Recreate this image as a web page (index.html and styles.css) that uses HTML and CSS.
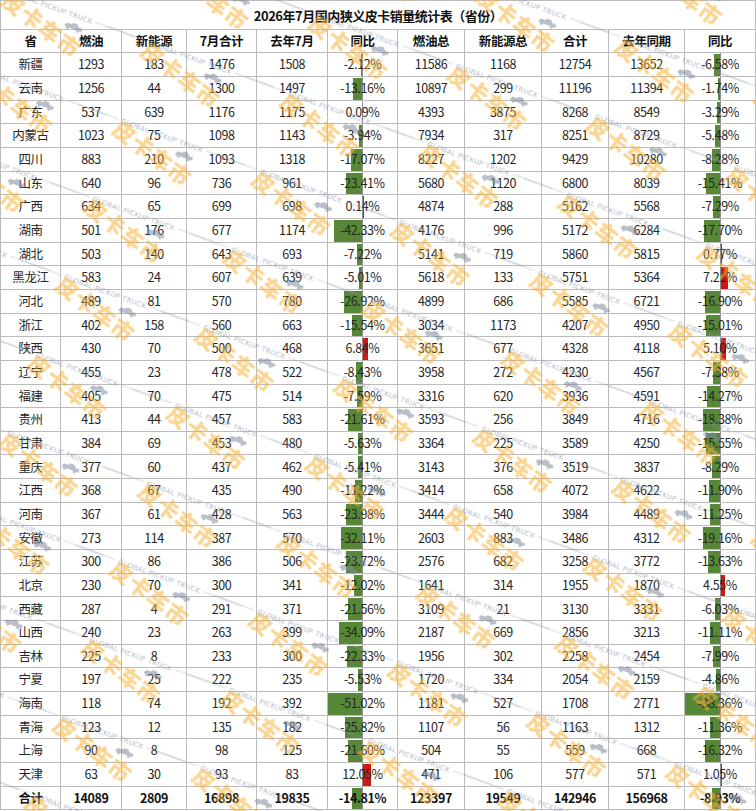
FILE: index.html
```html
<!DOCTYPE html>
<html lang="zh-CN">
<head>
<meta charset="utf-8">
<title>2026年7月国内狭义皮卡销量统计表（省份）</title>
<link rel="stylesheet" href="styles.css">
</head>
<body>
<div class="page">
  <div class="sheet">
    <div class="c title">2026年7月国内狭义皮卡销量统计表（省份）</div>

    <div class="c p h">省</div><div class="c h">燃油</div><div class="c h">新能源</div><div class="c h">7月合计</div><div class="c h">去年7月</div><div class="c h">同比</div><div class="c h">燃油总</div><div class="c h">新能源总</div><div class="c h">合计</div><div class="c h">去年同期</div><div class="c h">同比</div>

    <div class="c p">新疆</div><div class="c">1293</div><div class="c">183</div><div class="c">1476</div><div class="c">1508</div><div class="c y y1"><span class="n"><i style="width:1.41px"></i></span><span class="q"></span><em>-2.12%</em></div><div class="c">11586</div><div class="c">1168</div><div class="c">12754</div><div class="c">13652</div><div class="c y y2"><span class="n"><i style="width:6px"></i></span><span class="q"></span><em>-6.58%</em></div>

    <div class="c p">云南</div><div class="c">1256</div><div class="c">44</div><div class="c">1300</div><div class="c">1497</div><div class="c y y1"><span class="n"><i style="width:8.77px"></i></span><span class="q"></span><em>-13.16%</em></div><div class="c">10897</div><div class="c">299</div><div class="c">11196</div><div class="c">11394</div><div class="c y y2"><span class="n"><i style="width:1.59px"></i></span><span class="q"></span><em>-1.74%</em></div>

    <div class="c p">广东</div><div class="c">537</div><div class="c">639</div><div class="c">1176</div><div class="c">1175</div><div class="c y y1"><span class="n"></span><span class="q"><i style="width:0.06px"></i></span><em>0.09%</em></div><div class="c">4393</div><div class="c">3875</div><div class="c">8268</div><div class="c">8549</div><div class="c y y2"><span class="n"><i style="width:3px"></i></span><span class="q"></span><em>-3.29%</em></div>

    <div class="c p">内蒙古</div><div class="c">1023</div><div class="c">75</div><div class="c">1098</div><div class="c">1143</div><div class="c y y1"><span class="n"><i style="width:2.62px"></i></span><span class="q"></span><em>-3.94%</em></div><div class="c">7934</div><div class="c">317</div><div class="c">8251</div><div class="c">8729</div><div class="c y y2"><span class="n"><i style="width:5px"></i></span><span class="q"></span><em>-5.48%</em></div>

    <div class="c p">四川</div><div class="c">883</div><div class="c">210</div><div class="c">1093</div><div class="c">1318</div><div class="c y y1"><span class="n"><i style="width:11.37px"></i></span><span class="q"></span><em>-17.07%</em></div><div class="c">8227</div><div class="c">1202</div><div class="c">9429</div><div class="c">10280</div><div class="c y y2"><span class="n"><i style="width:7.55px"></i></span><span class="q"></span><em>-8.28%</em></div>

    <div class="c p">山东</div><div class="c">640</div><div class="c">96</div><div class="c">736</div><div class="c">961</div><div class="c y y1"><span class="n"><i style="width:15.59px"></i></span><span class="q"></span><em>-23.41%</em></div><div class="c">5680</div><div class="c">1120</div><div class="c">6800</div><div class="c">8039</div><div class="c y y2"><span class="n"><i style="width:14.05px"></i></span><span class="q"></span><em>-15.41%</em></div>

    <div class="c p">广西</div><div class="c">634</div><div class="c">65</div><div class="c">699</div><div class="c">698</div><div class="c y y1"><span class="n"></span><span class="q"><i style="width:0.09px"></i></span><em>0.14%</em></div><div class="c">4874</div><div class="c">288</div><div class="c">5162</div><div class="c">5568</div><div class="c y y2"><span class="n"><i style="width:6.65px"></i></span><span class="q"></span><em>-7.29%</em></div>

    <div class="c p">湖南</div><div class="c">501</div><div class="c">176</div><div class="c">677</div><div class="c">1174</div><div class="c y y1"><span class="n"><i style="width:28.19px"></i></span><span class="q"></span><em>-42.33%</em></div><div class="c">4176</div><div class="c">996</div><div class="c">5172</div><div class="c">6284</div><div class="c y y2"><span class="n"><i style="width:16.14px"></i></span><span class="q"></span><em>-17.70%</em></div>

    <div class="c p">湖北</div><div class="c">503</div><div class="c">140</div><div class="c">643</div><div class="c">693</div><div class="c y y1"><span class="n"><i style="width:4.81px"></i></span><span class="q"></span><em>-7.22%</em></div><div class="c">5141</div><div class="c">719</div><div class="c">5860</div><div class="c">5815</div><div class="c y y2"><span class="n"></span><span class="q"><i style="width:0.7px"></i></span><em>0.77%</em></div>

    <div class="c p">黑龙江</div><div class="c">583</div><div class="c">24</div><div class="c">607</div><div class="c">639</div><div class="c y y1"><span class="n"><i style="width:3.34px"></i></span><span class="q"></span><em>-5.01%</em></div><div class="c">5618</div><div class="c">133</div><div class="c">5751</div><div class="c">5364</div><div class="c y y2"><span class="n"></span><span class="q"><i style="width:6.58px"></i></span><em>7.21%</em></div>

    <div class="c p">河北</div><div class="c">489</div><div class="c">81</div><div class="c">570</div><div class="c">780</div><div class="c y y1"><span class="n"><i style="width:17.93px"></i></span><span class="q"></span><em>-26.92%</em></div><div class="c">4899</div><div class="c">686</div><div class="c">5585</div><div class="c">6721</div><div class="c y y2"><span class="n"><i style="width:15.41px"></i></span><span class="q"></span><em>-16.90%</em></div>

    <div class="c p">浙江</div><div class="c">402</div><div class="c">158</div><div class="c">560</div><div class="c">663</div><div class="c y y1"><span class="n"><i style="width:10.35px"></i></span><span class="q"></span><em>-15.54%</em></div><div class="c">3034</div><div class="c">1173</div><div class="c">4207</div><div class="c">4950</div><div class="c y y2"><span class="n"><i style="width:13.69px"></i></span><span class="q"></span><em>-15.01%</em></div>

    <div class="c p">陕西</div><div class="c">430</div><div class="c">70</div><div class="c">500</div><div class="c">468</div><div class="c y y1"><span class="n"></span><span class="q"><i style="width:4.56px"></i></span><em>6.84%</em></div><div class="c">3651</div><div class="c">677</div><div class="c">4328</div><div class="c">4118</div><div class="c y y2"><span class="n"></span><span class="q"><i style="width:4.65px"></i></span><em>5.10%</em></div>

    <div class="c p">辽宁</div><div class="c">455</div><div class="c">23</div><div class="c">478</div><div class="c">522</div><div class="c y y1"><span class="n"><i style="width:5.61px"></i></span><span class="q"></span><em>-8.43%</em></div><div class="c">3958</div><div class="c">272</div><div class="c">4230</div><div class="c">4567</div><div class="c y y2"><span class="n"><i style="width:6.73px"></i></span><span class="q"></span><em>-7.38%</em></div>

    <div class="c p">福建</div><div class="c">405</div><div class="c">70</div><div class="c">475</div><div class="c">514</div><div class="c y y1"><span class="n"><i style="width:5.05px"></i></span><span class="q"></span><em>-7.59%</em></div><div class="c">3316</div><div class="c">620</div><div class="c">3936</div><div class="c">4591</div><div class="c y y2"><span class="n"><i style="width:13.01px"></i></span><span class="q"></span><em>-14.27%</em></div>

    <div class="c p">贵州</div><div class="c">413</div><div class="c">44</div><div class="c">457</div><div class="c">583</div><div class="c y y1"><span class="n"><i style="width:14.39px"></i></span><span class="q"></span><em>-21.61%</em></div><div class="c">3593</div><div class="c">256</div><div class="c">3849</div><div class="c">4716</div><div class="c y y2"><span class="n"><i style="width:16.76px"></i></span><span class="q"></span><em>-18.38%</em></div>

    <div class="c p">甘肃</div><div class="c">384</div><div class="c">69</div><div class="c">453</div><div class="c">480</div><div class="c y y1"><span class="n"><i style="width:3.75px"></i></span><span class="q"></span><em>-5.63%</em></div><div class="c">3364</div><div class="c">225</div><div class="c">3589</div><div class="c">4250</div><div class="c y y2"><span class="n"><i style="width:14.18px"></i></span><span class="q"></span><em>-15.55%</em></div>

    <div class="c p">重庆</div><div class="c">377</div><div class="c">60</div><div class="c">437</div><div class="c">462</div><div class="c y y1"><span class="n"><i style="width:3.6px"></i></span><span class="q"></span><em>-5.41%</em></div><div class="c">3143</div><div class="c">376</div><div class="c">3519</div><div class="c">3837</div><div class="c y y2"><span class="n"><i style="width:7.56px"></i></span><span class="q"></span><em>-8.29%</em></div>

    <div class="c p">江西</div><div class="c">368</div><div class="c">67</div><div class="c">435</div><div class="c">490</div><div class="c y y1"><span class="n"><i style="width:7.47px"></i></span><span class="q"></span><em>-11.22%</em></div><div class="c">3414</div><div class="c">658</div><div class="c">4072</div><div class="c">4622</div><div class="c y y2"><span class="n"><i style="width:10.85px"></i></span><span class="q"></span><em>-11.90%</em></div>

    <div class="c p">河南</div><div class="c">367</div><div class="c">61</div><div class="c">428</div><div class="c">563</div><div class="c y y1"><span class="n"><i style="width:15.97px"></i></span><span class="q"></span><em>-23.98%</em></div><div class="c">3444</div><div class="c">540</div><div class="c">3984</div><div class="c">4489</div><div class="c y y2"><span class="n"><i style="width:10.26px"></i></span><span class="q"></span><em>-11.25%</em></div>

    <div class="c p">安徽</div><div class="c">273</div><div class="c">114</div><div class="c">387</div><div class="c">570</div><div class="c y y1"><span class="n"><i style="width:21.39px"></i></span><span class="q"></span><em>-32.11%</em></div><div class="c">2603</div><div class="c">883</div><div class="c">3486</div><div class="c">4312</div><div class="c y y2"><span class="n"><i style="width:17.47px"></i></span><span class="q"></span><em>-19.16%</em></div>

    <div class="c p">江苏</div><div class="c">300</div><div class="c">86</div><div class="c">386</div><div class="c">506</div><div class="c y y1"><span class="n"><i style="width:15.8px"></i></span><span class="q"></span><em>-23.72%</em></div><div class="c">2576</div><div class="c">682</div><div class="c">3258</div><div class="c">3772</div><div class="c y y2"><span class="n"><i style="width:12.43px"></i></span><span class="q"></span><em>-13.63%</em></div>

    <div class="c p">北京</div><div class="c">230</div><div class="c">70</div><div class="c">300</div><div class="c">341</div><div class="c y y1"><span class="n"><i style="width:8.01px"></i></span><span class="q"></span><em>-12.02%</em></div><div class="c">1641</div><div class="c">314</div><div class="c">1955</div><div class="c">1870</div><div class="c y y2"><span class="n"></span><span class="q"><i style="width:4.15px"></i></span><em>4.55%</em></div>

    <div class="c p">西藏</div><div class="c">287</div><div class="c">4</div><div class="c">291</div><div class="c">371</div><div class="c y y1"><span class="n"><i style="width:14.36px"></i></span><span class="q"></span><em>-21.56%</em></div><div class="c">3109</div><div class="c">21</div><div class="c">3130</div><div class="c">3331</div><div class="c y y2"><span class="n"><i style="width:5.5px"></i></span><span class="q"></span><em>-6.03%</em></div>

    <div class="c p">山西</div><div class="c">240</div><div class="c">23</div><div class="c">263</div><div class="c">399</div><div class="c y y1"><span class="n"><i style="width:22.7px"></i></span><span class="q"></span><em>-34.09%</em></div><div class="c">2187</div><div class="c">669</div><div class="c">2856</div><div class="c">3213</div><div class="c y y2"><span class="n"><i style="width:10.13px"></i></span><span class="q"></span><em>-11.11%</em></div>

    <div class="c p">吉林</div><div class="c">225</div><div class="c">8</div><div class="c">233</div><div class="c">300</div><div class="c y y1"><span class="n"><i style="width:14.87px"></i></span><span class="q"></span><em>-22.33%</em></div><div class="c">1956</div><div class="c">302</div><div class="c">2258</div><div class="c">2454</div><div class="c y y2"><span class="n"><i style="width:7.29px"></i></span><span class="q"></span><em>-7.99%</em></div>

    <div class="c p">宁夏</div><div class="c">197</div><div class="c">25</div><div class="c">222</div><div class="c">235</div><div class="c y y1"><span class="n"><i style="width:3.68px"></i></span><span class="q"></span><em>-5.53%</em></div><div class="c">1720</div><div class="c">334</div><div class="c">2054</div><div class="c">2159</div><div class="c y y2"><span class="n"><i style="width:4.43px"></i></span><span class="q"></span><em>-4.86%</em></div>

    <div class="c p">海南</div><div class="c">118</div><div class="c">74</div><div class="c">192</div><div class="c">392</div><div class="c y y1"><span class="n"><i style="width:33.98px"></i></span><span class="q"></span><em>-51.02%</em></div><div class="c">1181</div><div class="c">527</div><div class="c">1708</div><div class="c">2771</div><div class="c y y2"><span class="n"><i style="width:34.98px"></i></span><span class="q"></span><em>-38.36%</em></div>

    <div class="c p">青海</div><div class="c">123</div><div class="c">12</div><div class="c">135</div><div class="c">182</div><div class="c y y1"><span class="n"><i style="width:17.2px"></i></span><span class="q"></span><em>-25.82%</em></div><div class="c">1107</div><div class="c">56</div><div class="c">1163</div><div class="c">1312</div><div class="c y y2"><span class="n"><i style="width:10.36px"></i></span><span class="q"></span><em>-11.36%</em></div>

    <div class="c p">上海</div><div class="c">90</div><div class="c">8</div><div class="c">98</div><div class="c">125</div><div class="c y y1"><span class="n"><i style="width:14.39px"></i></span><span class="q"></span><em>-21.60%</em></div><div class="c">504</div><div class="c">55</div><div class="c">559</div><div class="c">668</div><div class="c y y2"><span class="n"><i style="width:14.88px"></i></span><span class="q"></span><em>-16.32%</em></div>

    <div class="c p">天津</div><div class="c">63</div><div class="c">30</div><div class="c">93</div><div class="c">83</div><div class="c y y1"><span class="n"></span><span class="q"><i style="width:8.03px"></i></span><em>12.05%</em></div><div class="c">471</div><div class="c">106</div><div class="c">577</div><div class="c">571</div><div class="c y y2"><span class="n"></span><span class="q"><i style="width:0.96px"></i></span><em>1.05%</em></div>

    <div class="c p b">合计</div><div class="c b">14089</div><div class="c b">2809</div><div class="c b">16898</div><div class="c b">19835</div><div class="c y y1 b"><span class="n"><i style="width:9.86px"></i></span><span class="q"></span><em>-14.81%</em></div><div class="c b">123397</div><div class="c b">19549</div><div class="c b">142946</div><div class="c b">156968</div><div class="c y y2 b"><span class="n"><i style="width:8.14px"></i></span><span class="q"></span><em>-8.93%</em></div>
  </div>

  <svg class="watermark" width="756" height="811" viewBox="0 0 756 811" aria-hidden="true">
    <defs>
      <g id="truck">
        <path d="M0 4.5 L1.5 2 L6 2 L7.5 0 L12 0 L13.5 2.5 L18 2.8 L18 6 L0 6 Z"/>
        <circle cx="3.5" cy="6.5" r="1.6"/>
        <circle cx="14" cy="6.5" r="1.6"/>
      </g>
      <g id="unit">
        <line class="wm-line" x1="-46" y1="0" x2="-4" y2="0"/>
        <text class="wm-en" x="0" y="2.5">GLOBAL PICKUP TRUCK</text>
        <line class="wm-line" x1="90" y1="0" x2="132" y2="0"/>
        <use href="#truck" class="wm-truck" x="62" y="8"/>
        <g transform="translate(40 21) rotate(17)">
          <text class="wm-cn" x="0" y="8">皮卡车市</text>
        </g>
      </g>
      <pattern id="wm" patternUnits="userSpaceOnUse" width="148" height="83" patternTransform="translate(482 428) rotate(20) translate(-60 -30)">
        <use href="#unit" x="-88" y="-53"/>
        <use href="#unit" x="60" y="-53"/>
        <use href="#unit" x="208" y="-53"/>
        <use href="#unit" x="-88" y="30"/>
        <use href="#unit" x="60" y="30"/>
        <use href="#unit" x="208" y="30"/>
        <use href="#unit" x="-88" y="113"/>
        <use href="#unit" x="60" y="113"/>
        <use href="#unit" x="208" y="113"/>
      </pattern>
    </defs>
    <rect x="0" y="0" width="756" height="811" fill="url(#wm)"/>
  </svg>
</div>
</body>
</html>
```

FILE: styles.css
```css
* {
  box-sizing: border-box;
}

body {
  margin: 0;
  background: #ffffff;
  font-family: "Noto Sans CJK SC", "Noto Sans", sans-serif;
  color: #262626;
}

.page {
  position: relative;
  width: 756px;
  height: 811px;
  overflow: hidden;
}

.sheet {
  display: grid;
  grid-template-columns: 61px 61px 65px 70px 71px 70px 67px 77px 67px 76px 71px;
  grid-template-rows: 30px 23.33px;
  grid-auto-rows: 23.67px;
  font-size: 12.5px;
  letter-spacing: -0.4px;
}

.c {
  display: flex;
  align-items: center;
  justify-content: center;
  border-right: 1px solid #bcbcbc;
  border-bottom: 1px solid #bcbcbc;
  white-space: nowrap;
  line-height: 1;
  min-width: 0;
}

.p {
  border-left: 1px solid #bcbcbc;
}

.title {
  grid-column: 1 / -1;
  border-left: 1px solid #bcbcbc;
  border-top: 1px solid #bcbcbc;
  font-weight: 700;
  font-size: 13px;
  letter-spacing: -0.5px;
  color: #111;
  padding-top: 1px;
}

.h {
  font-weight: 700;
  color: #111;
}

.b {
  font-weight: 700;
  color: #111;
}

.y {
  display: grid;
  grid-template-rows: 100%;
  align-items: stretch;
}

.y1 {
  grid-template-columns: 34px 1fr;
}

.y2 {
  grid-template-columns: 35px 1fr;
}

.y .n {
  grid-area: 1 / 1;
  display: flex;
  justify-content: flex-end;
  padding-top: 1px;
}

.y .q {
  grid-area: 1 / 2;
  display: flex;
  justify-content: flex-start;
  border-left: 1px solid #8f8f8f;
  padding-top: 1px;
}

.y .n i {
  display: block;
  background: #578837;
}

.y .q i {
  display: block;
  background: #cf1713;
}

.y em {
  grid-area: 1 / 1 / 2 / 3;
  font-style: normal;
  align-self: center;
  justify-self: center;
}

.watermark {
  position: absolute;
  left: 0;
  top: 0;
  pointer-events: none;
}

.wm-cn {
  font-family: "Noto Sans CJK SC", sans-serif;
  font-weight: 900;
  font-size: 22px;
  letter-spacing: 1px;
  text-anchor: middle;
  fill: #f6b33a;
  opacity: 0.55;
}

.wm-en {
  font-family: "DejaVu Sans", sans-serif;
  font-size: 7px;
  letter-spacing: 0.3px;
  fill: #8e99ab;
  opacity: 0.7;
}

.wm-line {
  stroke: #8e99ab;
  stroke-width: 0.7;
  opacity: 0.55;
}

.wm-truck {
  fill: #7f8a9d;
  opacity: 0.55;
}
```
